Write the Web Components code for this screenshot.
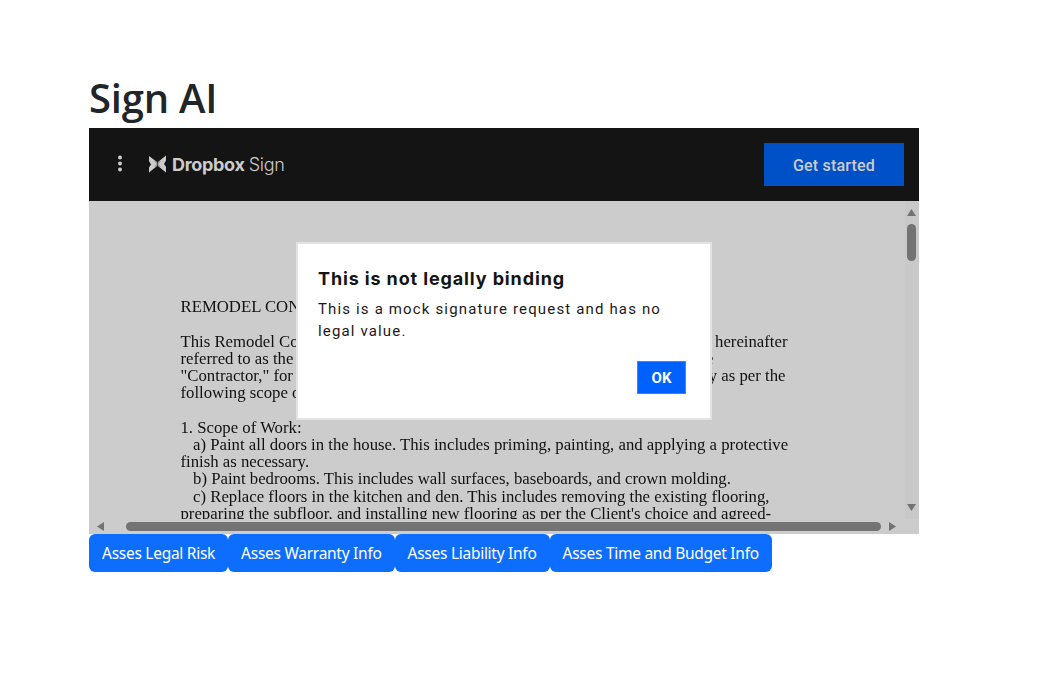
<!DOCTYPE html>
<html lang="en">
<head>
<meta charset="utf-8">
<title>Sign AI</title>
<style>
  html, body { margin: 0; background: #fff; overflow: hidden; }
</style>
</head>
<body>
<sign-page>
  <sign-frame>
    <sign-navbar></sign-navbar>
    <sign-document></sign-document>
    <frame-scroll></frame-scroll>
    <sign-dialog heading="This is not legally binding">This is a mock signature request and has no legal value.</sign-dialog>
  </sign-frame>
  <action-button>Asses Legal Risk</action-button><action-button>Asses Warranty Info</action-button><action-button>Asses Liability Info</action-button><action-button>Asses Time and Budget Info</action-button>
</sign-page>

<script>
class SignPage extends HTMLElement {
  connectedCallback() {
    this.attachShadow({ mode: 'open' });
    this.shadowRoot.innerHTML = `
      <style>
        :host { display: block; padding: 74px 0 0 89px; font-family: "Open Sans", "Noto Sans", sans-serif; }
        h1 { margin: 0 0 6px; font-size: 40px; line-height: 48px; font-weight: 600; color: #212529; letter-spacing: -0.2px; }
      </style>
      <h1>Sign AI</h1>
      <slot></slot>
    `;
  }
}

class SignFrame extends HTMLElement {
  connectedCallback() {
    this.attachShadow({ mode: 'open' });
    this.shadowRoot.innerHTML = `
      <style>
        :host { display: block; position: relative; width: 830px; height: 406px; overflow: hidden; background: #ccc; }
      </style>
      <slot></slot>
    `;
  }
}

class SignNavbar extends HTMLElement {
  connectedCallback() {
    this.attachShadow({ mode: 'open' });
    this.shadowRoot.innerHTML = `
      <style>
        :host { display: flex; align-items: center; height: 73px; background: #141414; padding: 0 15px 0 28px; box-sizing: border-box; color: #ccc; }
        .dots { width: 6px; height: 17px; margin-right: 26px; margin-top: -3px; }
        .logo { display: flex; align-items: center; flex: 1; margin-top: -1px; font-family: Inter, "Liberation Sans", sans-serif; font-size: 18px; }
        .logo svg { width: 18px; height: 18px; margin-right: 5px; }
        .logo b { font-weight: 700; letter-spacing: -0.3px; }
        .logo span { font-weight: 300; margin-left: 4px; letter-spacing: -0.3px; }
        .cta { width: 140px; height: 43px; box-sizing: border-box; padding-top: 2px; display: flex; align-items: center; justify-content: center; background: #0050c8; font: 500 16px Roboto, "Liberation Sans", sans-serif; letter-spacing: 0.2px; }
      </style>
      <svg class="dots" viewBox="0 0 6 17" fill="#ccc"><circle cx="3" cy="2.5" r="2"/><circle cx="3" cy="8.5" r="2"/><circle cx="3" cy="14.5" r="2"/></svg>
      <div class="logo">
        <svg viewBox="0 0 18 18">
          <path fill="#ccc" d="M0 1 L8 7 L8.5 9 L8 11 L0 17.5 L0 12.5 L2 9.5 L0 6 Z"/>
          <path fill="#ccc" d="M17 0.5 L17 5.5 L15 9 L17 12 L17 17.5 L9 11 L8.5 9 L9 7 Z"/>
          <path fill="none" stroke="#141414" stroke-width="0.5" d="M6 6.5 L11 11.5 M11 6.5 L6 11.5"/>
        </svg>
        <b>Dropbox</b><span>Sign</span>
      </div>
      <div class="cta">Get started</div>
    `;
  }
}

// each line is a left part and, for the lines the dialog splits, a right part
const DOC_LINES = [
  ['REMODEL CONTRACT', '', 'gap'],
  ['This Remodel Contract', 'hereinafter', 'w607'],
  ['referred to as the "Client,"', 'the', 'w533'],
  ['"Contractor," for the work', 'promptly as per the', 'w605'],
  ['following scope of work and terms.', '', 'gap'],
  ['1. Scope of Work:', '', ''],
  ['&nbsp;&nbsp;&nbsp;a) Paint all doors in the house. This includes priming, painting, and applying a protective', '', ''],
  ['finish as necessary.', '', ''],
  ['&nbsp;&nbsp;&nbsp;b) Paint bedrooms. This includes wall surfaces, baseboards, and crown molding.', '', ''],
  ['&nbsp;&nbsp;&nbsp;c) Replace floors in the kitchen and den. This includes removing the existing flooring,', '', ''],
  ['preparing the subfloor, and installing new flooring as per the Client\'s choice and agreed-', '', ''],
];

class SignDocument extends HTMLElement {
  connectedCallback() {
    this.attachShadow({ mode: 'open' });
    const lines = DOC_LINES
      .map(([left, right, cls]) => `<div class="line ${cls}"><span>${left}</span><span>${right}</span></div>`).join('');
    this.shadowRoot.innerHTML = `
      <style>
        :host { display: block; height: 318px; position: relative; overflow: hidden; }
        .page { padding: 96.7px 0 0 91.5px; font: 16.74px/17.1px "Liberation Serif", "Times New Roman", serif; color: #111; filter: blur(0.25px); }
        .line { display: flex; justify-content: space-between; white-space: nowrap; width: 640px; }
        .gap { margin-bottom: 18px; }
        .w607 { width: 607px; }
        .w533 { width: 533px; }
        .w605 { width: 605px; }
        .bar { position: absolute; left: 818px; top: 23px; width: 9px; height: 37px; background: #737373; border-radius: 5px; }
        svg { position: absolute; }
        .track { position: absolute; left: 816px; top: 0; width: 14px; height: 100%; background: #c9c9c9; }
      </style>
      <div class="page">${lines}</div>
      <div class="track"></div>
      <svg style="left:818px;top:8px" width="9" height="7" fill="#737373"><path d="M4.5 0 L9 7 L0 7 Z"/></svg>
      <div class="bar"></div>
      <svg style="left:818px;top:303px" width="9" height="7" fill="#737373"><path d="M0 0 L9 0 L4.5 7 Z"/></svg>
    `;
  }
}

class SignDialog extends HTMLElement {
  connectedCallback() {
    this.attachShadow({ mode: 'open' });
    this.shadowRoot.innerHTML = `
      <style>
        :host { display: block; position: absolute; left: 207px; top: 114px; width: 416px; height: 178px; box-sizing: border-box; padding: 24px 24px 25px 20px; background: #fff; border: 2px solid #e3e3e3; color: #1e1919; }
        h2 { margin: 0 0 8px; font: 700 18px/22px Inter, Roboto, "Liberation Sans", sans-serif; letter-spacing: 0.87px; color: #141414; }
        p { margin: 0; font: 400 15px/22px Roboto, "Liberation Sans", sans-serif; letter-spacing: 1.15px; }
        .row { display: flex; justify-content: flex-end; margin-top: 19px; }
        button { width: 49px; height: 33px; padding: 0; border: 1px solid #3d85fb; background: #0061fe; color: #fff; font: 700 15px Roboto, "Liberation Sans", sans-serif; }
      </style>
      <h2>${this.getAttribute('heading')}</h2>
      <p><slot></slot></p>
      <div class="row"><button>OK</button></div>
    `;
  }
}

class ActionButton extends HTMLElement {
  connectedCallback() {
    this.attachShadow({ mode: 'open' });
    this.shadowRoot.innerHTML = `
      <style>
        :host { display: inline-block; vertical-align: top; }
        button { display: block; height: 38px; padding: 0 13px; border: 0; border-radius: 6px; background: #0d6efd; color: #fff; font: 400 15.5px "Noto Sans", "Open Sans", sans-serif; letter-spacing: -0.27px; white-space: nowrap; }
      </style>
      <button><slot></slot></button>
    `;
  }
}

// horizontal scrollbar sits on the frame bottom, over the document
class FrameScroll extends HTMLElement {
  connectedCallback() {
    this.attachShadow({ mode: 'open' });
    this.shadowRoot.innerHTML = `
      <style>
        :host { display: block; position: absolute; left: 0; bottom: 0; width: 816px; height: 15px; background: #ccc; }
        .thumb { position: absolute; left: 37px; top: 3px; width: 755px; height: 9px; border-radius: 5px; background: #737373; }
        svg { position: absolute; top: 3px; }
      </style>
      <svg style="left:8px" width="7" height="9" fill="#737373"><path d="M7 0 L7 9 L0 4.5 Z"/></svg>
      <div class="thumb"></div>
      <svg style="left:800px" width="7" height="9" fill="#737373"><path d="M0 0 L7 4.5 L0 9 Z"/></svg>
    `;
  }
}

customElements.define('sign-page', SignPage);
customElements.define('sign-frame', SignFrame);
customElements.define('sign-navbar', SignNavbar);
customElements.define('sign-document', SignDocument);
customElements.define('frame-scroll', FrameScroll);
customElements.define('sign-dialog', SignDialog);
customElements.define('action-button', ActionButton);
</script>
</body>
</html>
